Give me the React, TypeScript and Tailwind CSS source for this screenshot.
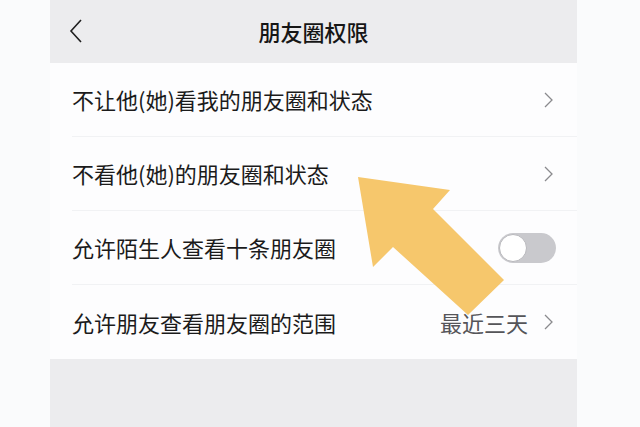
const FONT = '"Noto Sans CJK SC", "Noto Sans", sans-serif'

function ChevronRight() {
  return (
    <svg width="9" height="16" viewBox="0 0 9 16" fill="none" className="shrink-0">
      <path d="M1 1l7 7-7 7" stroke="#8a8a8e" strokeWidth="1.3" />
    </svg>
  )
}

function Row({ label, children, last }: { label: string; children?: React.ReactNode; last?: boolean }) {
  return (
    <li className="flex h-[74px] items-stretch pl-[22px]">
      <div
        className={`flex flex-1 items-center justify-between pr-[24px] ${last ? '' : 'border-b border-[#f1f2f4]'}`}
      >
        <span className="text-[22px] text-[#1b1b1b]">{label}</span>
        {children ?? <ChevronRight />}
      </div>
    </li>
  )
}

export default function App() {
  return (
    <div
      className="relative flex h-[427px] w-[640px] overflow-hidden bg-[#fafbfc]"
      style={{ fontFamily: FONT }}
    >
      <div className="ml-[50px] flex w-[527px] flex-col bg-[#ececee]">
        <header className="relative flex h-[63px] items-center justify-center">
          <svg
            width="14"
            height="24"
            viewBox="0 0 14 24"
            fill="none"
            className="absolute left-[19px] top-[19px]"
          >
            <path d="M12 1L2 12l10 11" stroke="#1f1f1f" strokeWidth="1.6" />
          </svg>
          <h1 className="text-[22px] font-medium text-[#161616]">朋友圈权限</h1>
        </header>
        <ul className="bg-[#fdfdfe]">
          <Row label="不让他(她)看我的朋友圈和状态" />
          <Row label="不看他(她)的朋友圈和状态" />
          <Row label="允许陌生人查看十条朋友圈">
            <span className="-mr-[3px] flex h-[30px] w-[58px] items-center rounded-full bg-[#c9c9cd]">
              <span className="ml-px h-[28px] w-[28px] rounded-full border border-[#b9b9bd] bg-white" />
            </span>
          </Row>
          <Row label="允许朋友查看朋友圈的范围" last>
            <span className="flex items-center gap-[16px]">
              <span className="text-[22px] text-[#555559]">最近三天</span>
              <ChevronRight />
            </span>
          </Row>
        </ul>
      </div>
      <svg
        className="pointer-events-none absolute left-0 top-0"
        width="640"
        height="427"
        viewBox="0 0 640 427"
      >
        <polygon
          points="358,177 450,190 433,209 504,280 468,315 393,247 373,267"
          fill="#f6c76c"
        />
      </svg>
    </div>
  )
}
